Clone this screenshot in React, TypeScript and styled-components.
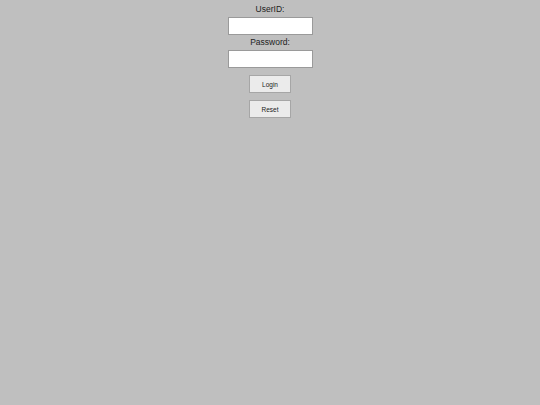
import styled, { createGlobalStyle } from "styled-components";

const GlobalStyle = createGlobalStyle`
  html, body {
    margin: 0;
    padding: 0;
    background: #bfbfbf;
  }
  body {
    font-family: "Liberation Sans", Arial, sans-serif;
  }
`;

const Page = styled.div`
  width: 540px;
  height: 405px;
  background: #bfbfbf;
  display: flex;
  flex-direction: column;
  align-items: center;
  padding-top: 5px;
  box-sizing: border-box;
`;

const Field = styled.div`
  display: flex;
  flex-direction: column;
  align-items: center;
  margin-bottom: 3px;
`;

const Label = styled.label`
  font-size: 8.5px;
  line-height: 9px;
  color: #222;
  margin-bottom: 3px;
`;

const Input = styled.input`
  width: 85px;
  height: 18px;
  box-sizing: border-box;
  border: 1px solid #9a9a9a;
  background: #ffffff;
  padding: 0 3px;
  font-size: 8px;
  outline: none;
`;

const Button = styled.button<{ $top: number }>`
  width: 42px;
  height: 18px;
  box-sizing: border-box;
  margin-top: ${(p) => p.$top}px;
  border: 1px solid #a6a6a6;
  background: #ebebeb;
  font-family: "Liberation Sans", Arial, sans-serif;
  font-size: 6.5px;
  color: #222;
  padding: 0;
`;

export default function App() {
  return (
    <>
      <GlobalStyle />
      <Page>
        <Field>
          <Label>UserID:</Label>
          <Input type="text" />
        </Field>
        <Field>
          <Label>Password:</Label>
          <Input type="password" />
        </Field>
        <Button $top={4}>Login</Button>
        <Button $top={7}>Reset</Button>
      </Page>
    </>
  );
}
